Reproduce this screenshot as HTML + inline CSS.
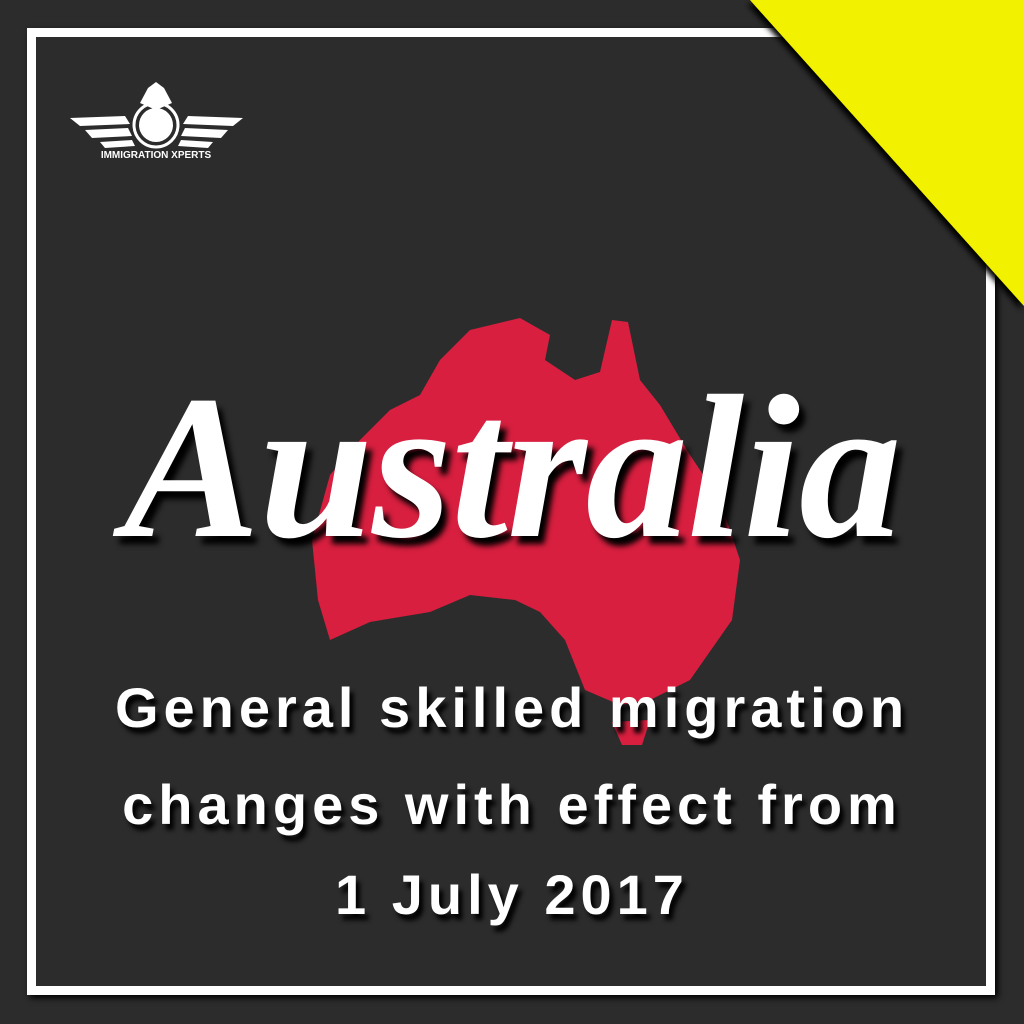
<!DOCTYPE html>
<html><head><style>
html,body{margin:0;padding:0}
body{width:1024px;height:1024px;background:#2c2c2c;position:relative;overflow:hidden;font-family:"Liberation Sans",sans-serif}
.frame{position:absolute;left:27px;top:28px;width:950px;height:949px;border:9px solid #fff;box-shadow:3px 3px 6px #000}
.tri{position:absolute;left:0;top:0}
.aus{position:absolute;left:0;width:1024px;text-align:center;top:350px;font-family:"Liberation Serif",serif;font-style:italic;font-weight:bold;font-size:205px;color:#fff;text-shadow:6px 8px 6px #000;letter-spacing:-1px}
.t{position:absolute;left:0;width:1024px;text-align:center;color:#fff;font-weight:bold;font-size:56px;letter-spacing:5px;text-shadow:4px 6px 5px #000}
</style></head><body>
<div class="frame"></div>
<svg class="tri" width="1024" height="1024">
<defs><filter id="s"><feDropShadow dx="-3" dy="4" stdDeviation="3" flood-color="#000"/></filter></defs>
<polygon points="750,0 1024,0 1024,306" fill="#f2f200" filter="url(#s)"/>
<path d="M470,330 L520,318 L550,335 L545,360 L575,380 L600,372 L612,320 L628,322 L640,380 L660,405 L690,455 L720,500 L740,560 L732,620 L690,680 L650,700 L620,705 L585,690 L565,640 L540,612 L515,600 L470,595 L430,612 L370,622 L330,640 L318,600 L312,540 L330,475 L360,440 L390,410 L420,395 L440,360 Z" fill="#d81f3f"/>
<path d="M612,722 L650,720 L642,745 L622,745 Z" fill="#d81f3f"/>
<g fill="#fff">
<path d="M70,118 L125,116 L130,124 L80,126 Z M85,130 L128,128 L132,136 L92,138 Z M100,142 L132,140 L135,146 L105,148 Z"/>
<path d="M243,118 L188,116 L183,124 L233,126 Z M228,130 L185,128 L181,136 L221,138 Z M213,142 L181,140 L178,146 L208,148 Z"/>
<circle cx="156" cy="125" r="22" fill="none" stroke="#fff" stroke-width="3"/>
<circle cx="156" cy="125" r="17"/>
<path d="M140,103 L148,88 L156,82 L164,88 L172,103 L156,110 Z"/>
</g>
<text x="156" y="158" font-family="Liberation Sans" font-size="10" font-weight="bold" fill="#fff" text-anchor="middle">IMMIGRATION XPERTS</text>
</svg>
<div class="aus">Australia</div>
<div class="t" style="top:675px">General skilled migration</div>
<div class="t" style="top:772px">changes with effect from</div>
<div class="t" style="top:862px">1 July 2017</div>
</body></html>
